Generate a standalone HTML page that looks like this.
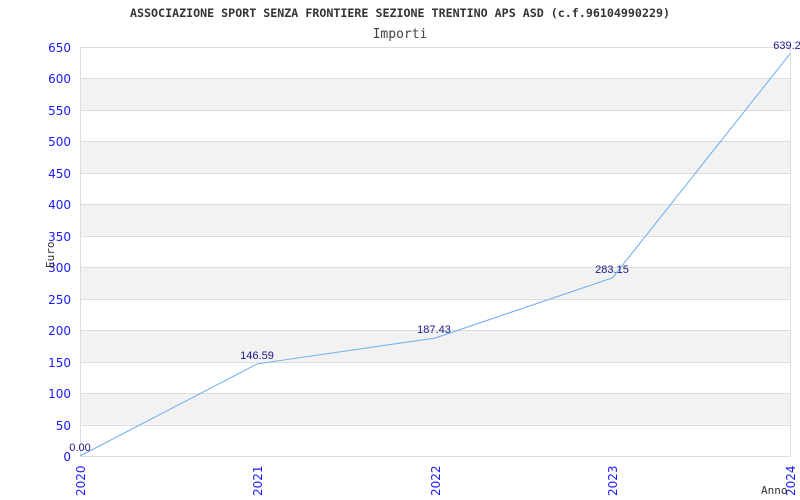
<!DOCTYPE html>
<html><head><style>body{margin:0;background:#fff}svg{display:block}</style></head><body>
<svg width="800" height="500" xmlns="http://www.w3.org/2000/svg">
<rect width="800" height="500" fill="#fff"/>
<text x="130" y="17" textLength="540" lengthAdjust="spacingAndGlyphs" font-family="DejaVu Sans Mono, Liberation Mono, monospace" font-size="11.5" font-weight="bold" fill="#333">ASSOCIAZIONE SPORT SENZA FRONTIERE SEZIONE TRENTINO APS ASD (c.f.96104990229)</text>
<text x="400" y="38" text-anchor="middle" font-family="DejaVu Sans Mono, Liberation Mono, monospace" font-size="13" fill="#444">Importi</text>
<g fill="#f2f2f2">
<rect x="80" y="78.5" width="710" height="31.5"/>
<rect x="80" y="141.4" width="710" height="31.5"/>
<rect x="80" y="204.3" width="710" height="31.5"/>
<rect x="80" y="267.2" width="710" height="31.5"/>
<rect x="80" y="330.2" width="710" height="31.5"/>
<rect x="80" y="393.1" width="710" height="31.5"/>
</g>
<g stroke="#ddd" stroke-width="1">
<line x1="80" y1="47.5" x2="790" y2="47.5"/><line x1="80" y1="78.5" x2="790" y2="78.5"/><line x1="80" y1="110.5" x2="790" y2="110.5"/><line x1="80" y1="141.5" x2="790" y2="141.5"/><line x1="80" y1="173.5" x2="790" y2="173.5"/><line x1="80" y1="204.5" x2="790" y2="204.5"/><line x1="80" y1="236.5" x2="790" y2="236.5"/><line x1="80" y1="267.5" x2="790" y2="267.5"/><line x1="80" y1="299.5" x2="790" y2="299.5"/><line x1="80" y1="330.5" x2="790" y2="330.5"/><line x1="80" y1="362.5" x2="790" y2="362.5"/><line x1="80" y1="393.5" x2="790" y2="393.5"/><line x1="80" y1="425.5" x2="790" y2="425.5"/><line x1="80" y1="456.5" x2="790" y2="456.5"/>
<line x1="80.5" y1="47" x2="80.5" y2="457"/><line x1="790.5" y1="47" x2="790.5" y2="457"/>
</g>
<g font-family="DejaVu Sans, Liberation Sans, sans-serif" font-size="12" fill="#1a1aff" text-anchor="end">
<text x="71" y="52">650</text><text x="71" y="83">600</text><text x="71" y="115">550</text><text x="71" y="146">500</text><text x="71" y="178">450</text><text x="71" y="209">400</text><text x="71" y="241">350</text><text x="71" y="272">300</text><text x="71" y="304">250</text><text x="71" y="335">200</text><text x="71" y="367">150</text><text x="71" y="398">100</text><text x="71" y="430">50</text><text x="71" y="461">0</text>
</g>
<g font-family="DejaVu Sans, Liberation Sans, sans-serif" font-size="12" fill="#1a1aff">
<text transform="translate(85,496) rotate(-90)">2020</text>
<text transform="translate(262,496) rotate(-90)">2021</text>
<text transform="translate(440,496) rotate(-90)">2022</text>
<text transform="translate(617,496) rotate(-90)">2023</text>
<text transform="translate(795,496) rotate(-90)">2024</text>
</g>
<text transform="translate(54,268) rotate(-90)" font-family="DejaVu Sans Mono, monospace" font-size="11" fill="#333">Euro</text>
<text x="761" y="494" font-family="DejaVu Sans Mono, monospace" font-size="11" fill="#333">Anno</text>
<polyline points="80,456 257.5,363.8 435,338.1 612.5,277.8 790,53.8" fill="none" stroke="#6aaef0" stroke-width="1"/>
<g font-family="Liberation Sans, sans-serif" font-size="11" fill="#1a1a8a" text-anchor="middle">
<text x="80" y="451">0.00</text><text x="257" y="359">146.59</text><text x="434" y="333">187.43</text><text x="612" y="273">283.15</text><text x="787" y="49">639.2</text>
</g>
</svg>
</body></html>
